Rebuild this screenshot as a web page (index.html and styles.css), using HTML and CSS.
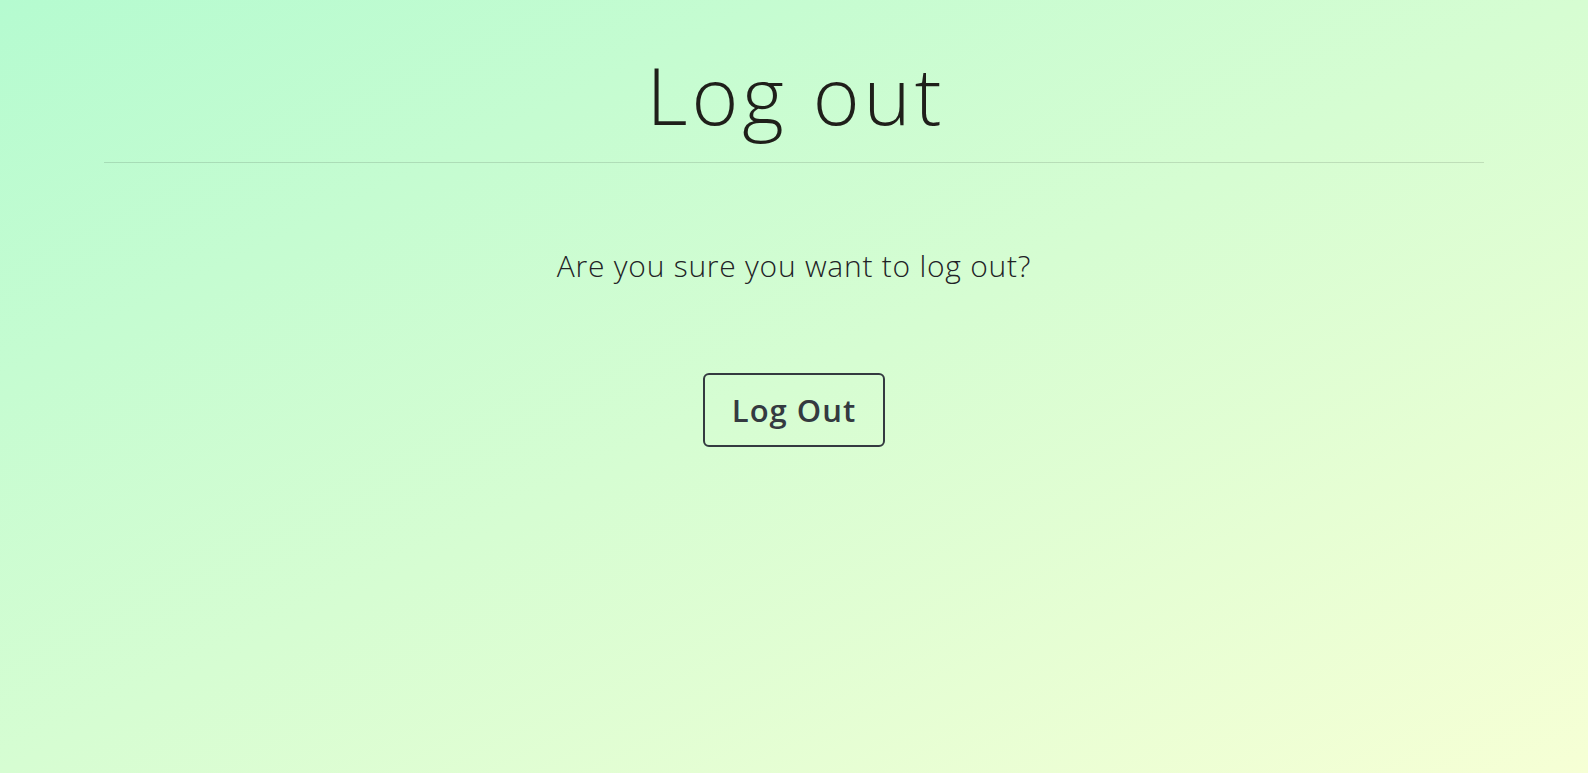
FILE: index.html
```html
<!DOCTYPE html>
<html lang="en">
<head>
<meta charset="utf-8">
<title>Log out</title>
<link rel="stylesheet" href="styles.css">
</head>
<body>
<main class="page">
  <div class="container">
    <h1 class="title">Log out</h1>
    <hr class="divider">
    <p class="question">Are you sure you want to log out?</p>
    <form class="actions">
      <button type="button" class="btn-logout">Log Out</button>
    </form>
  </div>
</main>
</body>
</html>
```
FILE: styles.css
```css
html, body {
  margin: 0;
  padding: 0;
}
body {
  min-height: 100vh;
  background: linear-gradient(to bottom right, #b5fbd0 0%, #d6fdd2 50%, #f6ffd5 100%);
  font-family: "Open Sans", "Liberation Sans", sans-serif;
  color: #212529;
}
.page {
  min-height: 100vh;
}
.container {
  width: 1380px;
  margin: 0 auto;
  display: flex;
  flex-direction: column;
  align-items: center;
}
.title {
  margin: 46px 0 0;
  font-size: 80px;
  font-weight: 300;
  line-height: 1.2;
  letter-spacing: 4px;
  text-indent: 4px;
  color: #1f1f1a;
}
.divider {
  align-self: stretch;
  margin: 20px 0 0;
  border: 0;
  border-top: 1px solid rgba(0, 0, 0, 0.12);
  height: 0;
}
.question {
  margin: 85px 0 0;
  font-size: 30px;
  font-weight: 300;
  line-height: 1.2;
  letter-spacing: 0.75px;
  color: #1f2326;
}
.actions {
  margin: 89px 0 0;
}
.btn-logout {
  width: 182px;
  height: 74px;
  background: transparent;
  border: 2px solid #343a40;
  border-radius: 6px;
  font-family: inherit;
  font-size: 31px;
  font-weight: 600;
  letter-spacing: 1px;
  color: #343a40;
  cursor: pointer;
}
```
